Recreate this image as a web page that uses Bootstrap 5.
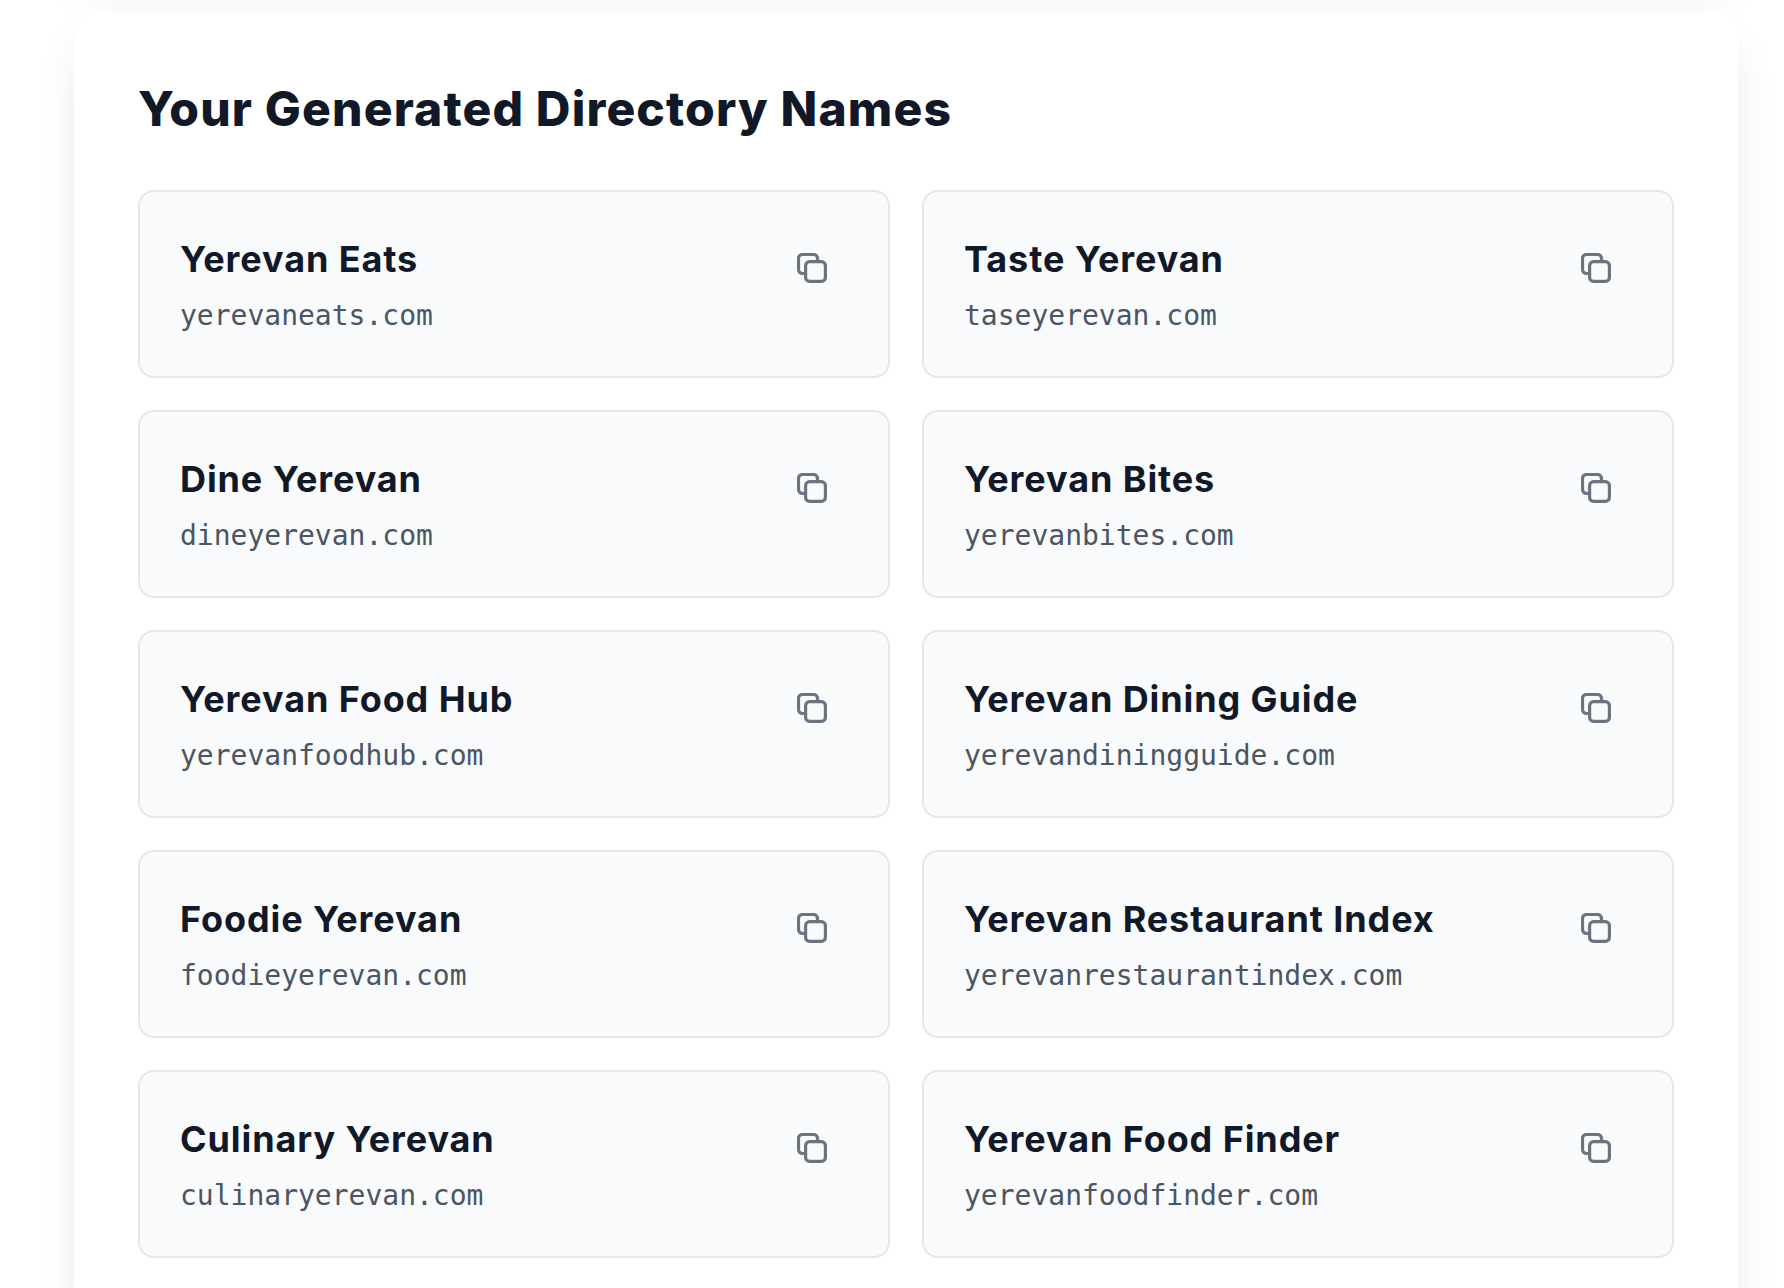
<!DOCTYPE html>
<html lang="en">
<head>
    <meta charset="UTF-8">
    <meta name="viewport" content="width=device-width, initial-scale=1.0">
    <title>Your Generated Directory Names</title>
    <link href="https://cdn.jsdelivr.net/npm/bootstrap@5.3.0/dist/css/bootstrap.min.css" rel="stylesheet">
    <style>
        html, body {
            overflow: hidden;
            background-color: #fff;
        }
        .page-wrap {
            padding: 0 46px 0 74px;
            margin-top: -131px;
        }
        .panel {
            background-color: #fff;
            border-radius: 24px;
            box-shadow: 0 25px 50px -12px rgba(0, 0, 0, 0.13);
        }
        .panel-prev {
            height: 100px;
            margin-bottom: 44px;
        }
        .panel-main {
            padding: 64px;
        }
        .panel-title {
            font-family: Inter, "Liberation Sans", sans-serif;
            font-size: 48px;
            font-weight: 800;
            line-height: 64px;
            letter-spacing: 1.15px;
            color: #111827;
            margin-bottom: 49px;
        }
        .name-grid {
            --bs-gutter-x: 32px;
            --bs-gutter-y: 32px;
        }
        .name-card {
            background-color: #f9fafb;
            border: 2px solid #e5e7eb;
            border-radius: 16px;
            padding: 40px;
            height: 188px;
        }
        .name-title {
            font-family: Inter, "Liberation Sans", sans-serif;
            font-size: 36px;
            font-weight: 700;
            line-height: 54px;
            letter-spacing: 0.9px;
            color: #111827;
            margin: 0 0 11px;
        }
        .name-domain {
            font-family: "DejaVu Sans Mono", "Liberation Mono", monospace;
            font-size: 28px;
            line-height: 38px;
            color: #4b5563;
        }
        .copy-icon {
            width: 30px;
            height: 30px;
            color: #6b7280;
            margin: 21px 21px 0 0;
        }
    </style>
</head>
<body>
    <div class="page-wrap">
        <div class="panel panel-prev"></div>
        <div class="panel panel-main">
            <h2 class="panel-title">Your Generated Directory Names</h2>
            <div class="row row-cols-2 name-grid" id="names"></div>
        </div>
    </div>

    <script>
        const names = [
            ['Yerevan Eats', 'yerevaneats.com'],
            ['Taste Yerevan', 'taseyerevan.com'],
            ['Dine Yerevan', 'dineyerevan.com'],
            ['Yerevan Bites', 'yerevanbites.com'],
            ['Yerevan Food Hub', 'yerevanfoodhub.com'],
            ['Yerevan Dining Guide', 'yerevandiningguide.com'],
            ['Foodie Yerevan', 'foodieyerevan.com'],
            ['Yerevan Restaurant Index', 'yerevanrestaurantindex.com'],
            ['Culinary Yerevan', 'culinaryerevan.com'],
            ['Yerevan Food Finder', 'yerevanfoodfinder.com']
        ];

        const icon = `<svg class="copy-icon flex-shrink-0" viewBox="0 0 30 30" fill="none" stroke="currentColor" stroke-width="3.2">
            <path d="M7 20.5H5.5a4 4 0 0 1-4-4V5.5a4 4 0 0 1 4-4h11a4 4 0 0 1 4 4V7"/>
            <rect x="8.6" y="8.6" width="19.8" height="19.8" rx="4"/>
        </svg>`;

        document.getElementById('names').innerHTML = names.map(n => `
            <div class="col">
                <div class="name-card d-flex justify-content-between align-items-start">
                    <div>
                        <h3 class="name-title">${n[0]}</h3>
                        <div class="name-domain">${n[1]}</div>
                    </div>
                    ${icon}
                </div>
            </div>`).join('');
    </script>
    <script src="https://cdn.jsdelivr.net/npm/bootstrap@5.3.0/dist/js/bootstrap.bundle.min.js"></script>
</body>
</html>
